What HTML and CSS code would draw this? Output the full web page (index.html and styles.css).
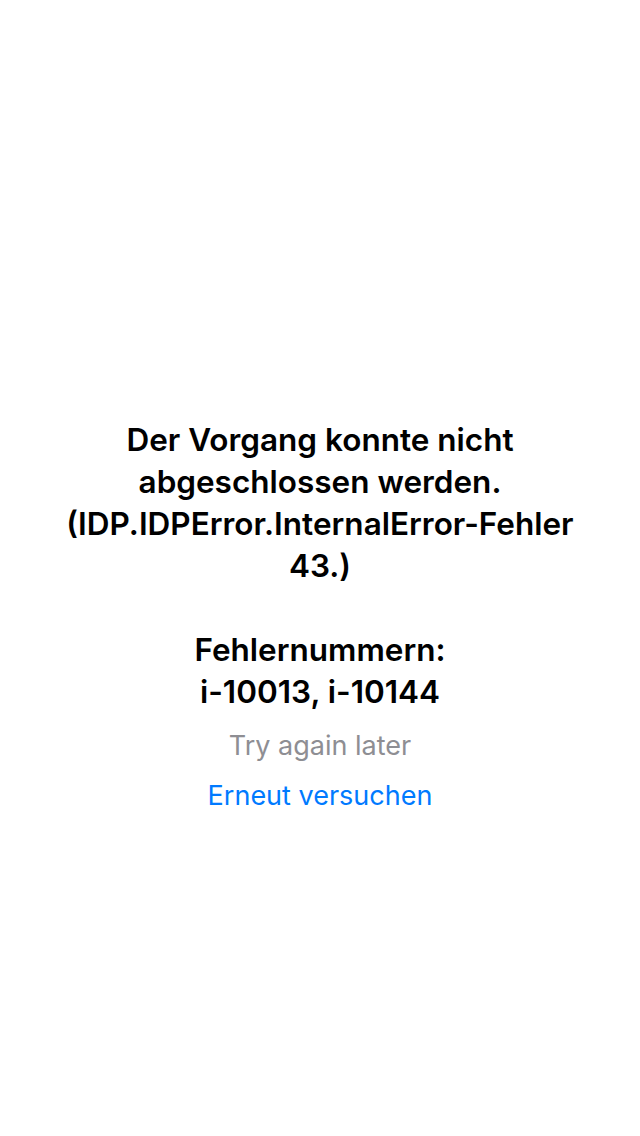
FILE: index.html
```html
<!DOCTYPE html>
<html lang="de">
<head>
<meta charset="utf-8">
<link rel="stylesheet" href="styles.css">
</head>
<body>
<main class="screen">
  <p class="message">Der Vorgang konnte nicht abgeschlossen werden. (IDP.IDPError.InternalError-Fehler 43.)</p>
  <p class="message codes">Fehlernummern:<br>i-10013, i-10144</p>
  <p class="hint">Try again later</p>
  <a class="retry" href="#">Erneut versuchen</a>
</main>
</body>
</html>
```
FILE: styles.css
```css
html, body {
  margin: 0;
  padding: 0;
  background: #ffffff;
}
body {
  font-family: Inter, "Noto Sans", "Liberation Sans", sans-serif;
  width: 640px;
  height: 1136px;
  overflow: hidden;
}
.screen {
  display: flex;
  flex-direction: column;
  align-items: center;
  padding: 419px 50px 0;
  text-align: center;
}
.message {
  margin: 0;
  font-size: 31.5px;
  font-weight: 600;
  line-height: 42px;
  color: #000;
  max-width: 530px;
}
.codes {
  margin-top: 42px;
}
.hint {
  margin: 16px 0 0;
  font-size: 27px;
  line-height: 34px;
  color: #8e8e93;
}
.retry {
  margin-top: 16px;
  font-size: 27px;
  line-height: 34px;
  color: #007aff;
  text-decoration: none;
}
```
